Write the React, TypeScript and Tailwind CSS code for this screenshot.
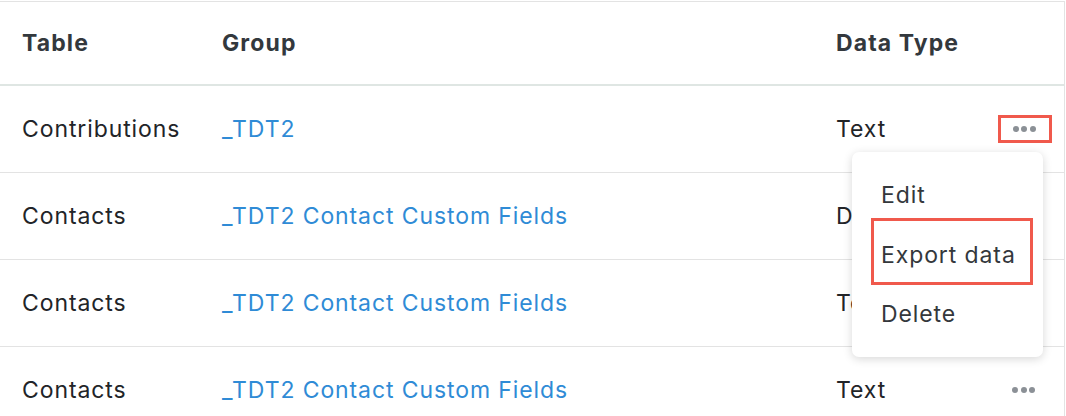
import React from 'react';

interface Row {
  table: string;
  group: string;
  type: string;
}

const rows: Row[] = [
  { table: 'Contributions', group: '_TDT2', type: 'Text' },
  { table: 'Contacts', group: '_TDT2 Contact Custom Fields', type: 'Date' },
  { table: 'Contacts', group: '_TDT2 Contact Custom Fields', type: 'Text' },
  { table: 'Contacts', group: '_TDT2 Contact Custom Fields', type: 'Text' },
];

const Dots: React.FC = () => (
  <span className="flex items-center gap-[2.5px]">
    <span className="w-[6px] h-[6px] rounded-full bg-[#8b9096]" />
    <span className="w-[6px] h-[6px] rounded-full bg-[#8b9096]" />
    <span className="w-[6px] h-[6px] rounded-full bg-[#8b9096]" />
  </span>
);

const App: React.FC = () => {
  return (
    <div
      className="relative w-[1066px] h-[416px] overflow-hidden bg-white pt-px"
      style={{ fontFamily: 'Inter, "Noto Sans", sans-serif' }}
    >
      <div className="border-t border-r border-[#e3e3e3] w-[1065px]">
        {/* header */}
        <div className="grid grid-cols-[200px_614px_1fr] pl-[22px] h-[84px] items-center border-b-2 border-[#dfe6e3] text-[23px] font-bold tracking-[1.1px] text-[#33383d]">
          <span>Table</span>
          <span>Group</span>
          <span>Data Type</span>
        </div>

        {rows.map((row, i) => (
          <div
            key={i}
            className="grid grid-cols-[200px_614px_176px_1fr] pl-[22px] h-[87px] items-center border-b border-[#e3e3e3] text-[23px] tracking-[0.9px] text-[#222428]"
          >
            <span>{row.table}</span>
            <span className="text-[#2f8bd6]">{row.group}</span>
            <span>{row.type}</span>
            <span className="flex items-center">
              {i === 0 ? (
                <span className="-ml-[14px] w-[54px] h-[28px] border-[3px] border-[#f0594c] flex items-center justify-center pr-[2px]">
                  <Dots />
                </span>
              ) : i === 3 ? (
                <Dots />
              ) : null}
            </span>
          </div>
        ))}
      </div>

      {/* dropdown menu */}
      <div className="absolute left-[852px] top-[152px] w-[191px] bg-white rounded-[7px] shadow-[0_2px_10px_rgba(0,0,0,0.16)] pb-[16px] text-[23px] tracking-[0.9px] text-[#34383c]">
        <div className="h-[66px] pt-[20px] pl-[29px] flex items-center">Edit</div>
        <div className="ml-[19px] mr-[10px] h-[67px] border-[3px] border-[#f0594c] pl-[7px] pt-[8px] flex items-center">
          Export data
        </div>
        <div className="h-[56px] pt-[2px] pl-[29px] flex items-center">Delete</div>
      </div>
    </div>
  );
};

export default App;
